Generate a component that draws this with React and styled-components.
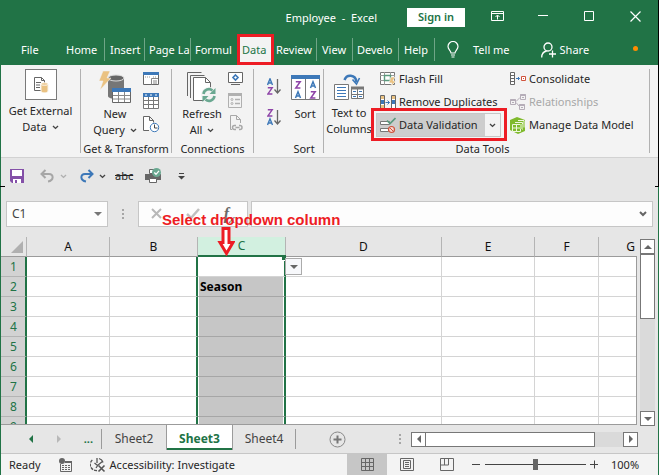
import React from 'react';
import styled, { createGlobalStyle, css } from 'styled-components';

const green = '#217346';
const ink = '#262626';
const red = '#ed1c24';

const Global = createGlobalStyle`
  *, *::before, *::after { box-sizing: border-box; }
  body { margin: 0; background: #e6e6e6; }
  body, button, input { font-family: "Noto Sans", "Open Sans", sans-serif; font-size: 11px; line-height: 16px; color: ${ink}; }
  button { border: 0; padding: 0; background: none; white-space: nowrap; }
  svg { display: block; flex: none; }
`;

const Window = styled.div`
  position: relative;
  display: flex;
  flex-direction: column;
  min-height: 100vh;
  background: #e6e6e6;
  border: solid ${green};
  border-width: 0 1px 1px;
`;
const EdgeMark = styled.i`
  position: absolute;
  background: #000;
  ${p => p.$left
    ? css`left: -1px; top: 186px; width: 5px; height: 1px;`
    : css`right: -1px; top: 0; width: 1px; height: 186px;`}
`;
const EdgeTick = styled.i`
  position: absolute;
  right: -1px;
  top: 186px;
  width: 4px;
  height: 1px;
  background: #000;
`;

/* Title bar */
const TitleBar = styled.header`
  display: flex;
  align-items: center;
  height: 34px;
  padding-right: 17px;
  background: ${green};
  color: #fff;
`;
const DocTitle = styled.h1`
  flex: 1;
  margin: 0;
  padding: 2px 30px 0 0;
  font-size: 11px;
  font-weight: 400;
  text-align: right;
  white-space: pre;
`;
const SignIn = styled.button`
  width: 58px;
  height: 19px;
  margin-right: 26px;
  background: #fff;
  color: ${green};
  font-weight: 600;
  line-height: 18px;
`;
const WinButtons = styled.div`
  display: flex;
  flex: none;
  gap: 34px;
  color: #fff;
`;
const WinButton = styled.button`
  display: grid;
  place-items: center;
  width: 12px;
  height: 16px;
  margin-top: -2px;
  color: inherit;
`;

/* Ribbon tabs */
const TabBar = styled.nav`
  display: flex;
  align-items: center;
  height: 31px;
  background: ${green};
  color: #fff;
`;
const Tab = styled.button`
  flex: none;
  width: ${p => p.$w}px;
  height: 23px;
  padding-left: ${p => p.$pad ?? 5}px;
  color: #fff;
  text-align: left;
  ${p => p.$sep && css`border-right: 1px solid #6fa587;`}
`;
const ActiveTab = styled(Tab)`
  height: 31px;
  border: 3px solid ${red};
  padding-left: 2px;
  background: #f3f3f3;
  color: ${green};
`;
const TabTool = styled.button`
  display: flex;
  align-items: center;
  flex: none;
  gap: ${p => p.$gap}px;
  margin-left: ${p => p.$ml}px;
  color: #fff;
`;
const Dot = styled.i`
  width: 5px;
  height: 5px;
  margin: 0 20px 3px auto;
  border-radius: 50%;
  background: #ff8c00;
`;

/* Ribbon */
const Ribbon = styled.section`
  display: flex;
  height: 93px;
  padding: 4px 8px 0 0;
  background: #f3f3f3;
  border-bottom: 1px solid #d2d2d2;
`;
const Group = styled.div`
  display: flex;
  flex-direction: column;
  flex: ${p => (p.$w ? 'none' : '1')};
  width: ${p => (p.$w ? p.$w + 'px' : 'auto')};
  min-width: 0;
  height: 84px;
  border-right: 1px solid #b1b1b1;
`;
const GroupBody = styled.div`
  display: flex;
  flex: 1;
  min-height: 0;
  padding-left: ${p => p.$pl || 0}px;
`;
const GroupLabel = styled.div`
  height: 16px;
  margin-bottom: -6px;
  padding: 0 ${p => p.$pr || 0}px 0 ${p => p.$pl || 0}px;
  text-align: center;
  white-space: nowrap;
  line-height: 12px;
`;
const BigButton = styled.button`
  display: flex;
  flex-direction: column;
  align-items: center;
  flex: none;
  width: ${p => p.$w}px;
  height: 70px;
`;
const BigIcon = styled.span`
  display: grid;
  place-items: center;
  flex: none;
  height: ${p => p.$h || 37}px;
`;
const BoxedIcon = styled.span`
  display: grid;
  place-items: center;
  width: 32px;
  height: 31px;
  margin-bottom: 3px;
  flex: none;
  border: 1px solid #7a7a7a;
  background: #fff;
`;
const Line = styled.span`
  display: flex;
  align-items: center;
  gap: 5px;
  height: 16px;
`;
const IconColumn = styled.div`
  display: flex;
  flex-direction: column;
  flex: none;
  gap: ${p => p.$gap || 6}px;
  padding-top: ${p => p.$pt || 2}px;
  margin-left: ${p => p.$ml || 0}px;
`;
const ToolList = styled.div`
  display: flex;
  flex-direction: column;
  flex: none;
  width: 130px;
  gap: 7px;
  padding-top: 2px;
`;
const Tool = styled.button`
  display: flex;
  align-items: center;
  gap: 3px;
  height: 16px;
  color: ${p => (p.disabled ? '#a8a8a8' : ink)};
`;
const SplitTool = styled.div`
  position: relative;
  display: flex;
  width: 125px;
  height: 24px;
  margin: -4px 0 0 -4px;
  background: #cdcdcd;
  border: 1px solid #c6c6c6;
  &::after {
    content: '';
    position: absolute;
    inset: -6px -7px -5px -6px;
    border: 3px solid ${red};
    pointer-events: none;
  }
`;
const SplitMain = styled(Tool)`
  flex: 1;
  height: 22px;
  padding-left: 3px;
`;
const SplitArrow = styled.button`
  display: grid;
  place-items: center;
  width: 15px;
  background: #f3f3f3;
`;

/* Quick access */
const QuickBar = styled.div`
  display: flex;
  align-items: center;
  height: 36px;
  padding-left: 8px;
`;
const QuickButton = styled.button`
  display: grid;
  place-items: center;
  width: ${p => p.$w || 16}px;
  height: 20px;
  margin-right: ${p => p.$mr || 0}px;
`;
const Strike = styled.s`
  font-size: 11px;
`;

/* Formula bar */
const FormulaRow = styled.div`
  display: flex;
  height: 43px;
  padding: 7px 5px 10px;
`;
const Field = styled.div`
  display: flex;
  align-items: center;
  flex: ${p => (p.$w ? 'none' : '1')};
  width: ${p => (p.$w ? p.$w + 'px' : 'auto')};
  min-width: 0;
  border: 1px solid #c6c6c6;
  background: #fdfdfd;
  padding: 0 ${p => p.$px || 5}px;
  justify-content: ${p => (p.$spread ? 'space-between' : 'flex-start')};
`;
const TextInput = styled.input`
  flex: 1;
  min-width: 0;
  border: 0;
  padding: 0;
  background: none;
  outline: none;
  font-size: 12px;
  color: #444;
`;
const Grip = styled.span`
  display: grid;
  place-items: center;
  flex: none;
  width: ${p => p.$w}px;
`;
const Fx = styled.button`
  font: italic bold 16px/20px "Liberation Serif", serif;
  color: #6b6b6b;
  sub { font-size: 12px; line-height: 0; }
`;

/* Sheet */
const SheetArea = styled.main`
  display: flex;
  flex: 1;
  min-height: 188px;
`;
const GridClip = styled.div`
  position: relative;
  flex: 1;
  min-width: 0;
  height: 188px;
  overflow: hidden;
  border-bottom: 1px solid #9b9b9b;
  &::after {
    content: '';
    position: absolute;
    right: 0;
    top: 19px;
    bottom: 0;
    width: 1px;
    background: #9b9b9b;
  }
`;
const Table = styled.table`
  width: 662px;
  table-layout: fixed;
  border-collapse: separate;
  border-spacing: 0;
  font-size: 12px;
`;
const Col = styled.col`
  width: ${p => p.$w}px;
`;
const HeadCell = styled.th`
  height: 20px;
  padding: 0;
  font-weight: 400;
  line-height: 18px;
  color: ${p => (p.$on ? green : '#111')};
  background: ${p => (p.$on ? '#d2f0e0' : '#e6e6e6')};
  border-bottom: ${p => (p.$on ? '2px solid ' + green : '1px solid #9b9b9b')};
  border-right: 1px solid #b4b4b4;
`;
const RowHead = styled.th`
  height: 20px;
  padding: 0 0 0 1px;
  font-weight: 400;
  line-height: 17px;
  color: ${green};
  background: #d2d2d2;
  border-right: 2px solid ${green};
  border-bottom: 1px solid #b4b4b4;
`;
const Cell = styled.td`
  height: 20px;
  padding: 0;
  background: #fff;
  border-right: 1px solid #d4d4d4;
  border-bottom: 1px solid #d4d4d4;
  ${p => p.$beforeSel && css`border-right: 2px solid ${green};`}
  ${p => p.$sel && css`
    padding-left: 2px;
    border-right: 2px solid ${green};
    border-bottom-color: ${p.$active ? '#d4d4d4' : '#a6a6a6'};
    background: ${p.$active ? '#fff' : '#c6c6c6'};
    box-shadow: inset 1px 0 #fff, inset -1px 0 #fff;
    color: #000;
    font-weight: 700;
    line-height: 18px;
  `}
`;
const CellMenu = styled.button`
  position: absolute;
  left: 284px;
  top: 21px;
  display: grid;
  place-items: center;
  width: 17px;
  height: 17px;
  border: 1px solid #ababab;
  background: #f7f8fb;
`;
const Handle = styled.i`
  position: absolute;
  left: 281px;
  top: 18px;
  width: 4px;
  height: 6px;
  background: ${green};
  border-bottom: 1px solid #fff;
`;
const Note = styled.p`
  position: absolute;
  left: 161px;
  top: 211px;
  margin: 0;
  color: ${red};
  font: bold 15px/18px "Liberation Sans", sans-serif;
  white-space: nowrap;
`;
const NoteArrow = styled.svg`
  position: absolute;
  left: 216px;
  top: 227px;
`;

/* Scroll bars */
const VBar = styled.div`
  display: flex;
  flex-direction: column;
  flex: none;
  width: 15px;
  margin: 2px 3px 0 3px;
  height: 187px;
  background: #dadada;
`;
const HBar = styled.div`
  display: flex;
  flex: 1;
  height: 15px;
  min-width: 0;
  background: #dadada;
`;
const ScrollButton = styled.button`
  display: grid;
  place-items: center;
  flex: none;
  width: 15px;
  height: 15px;
  border: 1px solid #777;
  background: #fff;
`;
const VThumb = styled.div`
  height: 66px;
  margin: -1px 0 auto;
  border: 1px solid #777;
  border-top-width: 2px;
  background: #fff;
`;
const HThumb = styled.div`
  width: 75%;
  margin: 0 auto 0 -1px;
  border: 1px solid #777;
  background: #fff;
`;

/* Sheet tabs */
const SheetBar = styled.div`
  display: flex;
  align-items: center;
  height: 27px;
  padding: 0 20px 1px 0;
`;
const SheetNav = styled.div`
  display: flex;
  align-items: center;
  justify-content: space-between;
  flex: none;
  width: 101px;
  height: 20px;
  padding: 0 8px 0 26px;
  border-right: 1px solid #9b9b9b;
  color: ${green};
  font-weight: 700;
`;
const SheetTab = styled.button`
  flex: none;
  width: ${p => p.$w}px;
  height: 20px;
  font-size: 12px;
  line-height: 18px;
  color: #444;
  ${p => p.$end && css`border-right: 1px solid #9b9b9b;`}
  ${p => p.$on && css`
    position: relative;
    align-self: flex-start;
    height: 25px;
    margin-top: -1px;
    padding-top: 3px;
    color: ${green};
    font-weight: 700;
    background: #fff;
    border: solid #9b9b9b;
    border-width: 0 1px;
    box-shadow: inset 0 -2px ${green};
  `}
`;
const AddSheet = styled.button`
  margin: 0 43px 0 33px;
`;

/* Status bar */
const StatusBar = styled.footer`
  display: flex;
  align-items: center;
  height: 22px;
  padding: 0 19px 0 8px;
  background: #f3f3f3;
  border-top: 1px solid #c6c6c6;
  white-space: nowrap;
`;
const StatusButton = styled.button`
  display: flex;
  align-items: center;
  gap: 4px;
  margin-left: ${p => p.$ml || 0}px;
`;
const ViewButton = styled.button`
  display: grid;
  place-items: center;
  flex: none;
  width: 40px;
  height: 21px;
  background: ${p => (p.$on ? '#c6c6c6' : 'transparent')};
`;
const Views = styled.div`
  display: flex;
  margin-left: auto;
  margin-right: 5px;
`;
const Zoom = styled.input`
  appearance: none;
  width: 101px;
  height: 12px;
  margin: 0 4px;
  background: linear-gradient(#444, #444) center / 100% 1px no-repeat;
  &::-webkit-slider-thumb {
    appearance: none;
    width: 5px;
    height: 11px;
    background: #666;
  }
`;
const ZoomValue = styled.output`
  width: 28px;
  margin-left: 12px;
`;

const Chevron = ({ c = '#444' }) => (
  <svg width="7" height="5" viewBox="0 0 7 5" fill="none" stroke={c} strokeWidth="1.4"><path d="M1 1l2.5 2.4L6 1" /></svg>
);
const Tri = ({ dir = 'down', c = '#666', s = 8 }) => {
  const d = { down: 'M0 2h8l-4 4z', up: 'M0 6h8l-4-4z', left: 'M6 0v8l-4-4z', right: 'M2 0v8l4-4z' }[dir];
  return <svg width={s} height={s} viewBox="0 0 8 8"><path d={d} fill={c} /></svg>;
};
const Dots = () => (
  <svg width="3" height="12" fill="#a6a6a6"><path d="M0 1h2v2H0zM0 5h2v2H0zM0 9h2v2H0z" /></svg>
);
const Plus = ({ minus }) => (
  <svg width="9" height="9" stroke="#444" fill="none"><path d={minus ? 'M0 4.5h8' : 'M0 4.5h8M4.5 .5v8'} /></svg>
);

const ExternalIcon = () => (
  <svg width="16" height="16" viewBox="0 0 16 16" fill="none">
    <path d="M1.5.5h7l3 3v10h-10z" fill="#fff" stroke="#666" /><path d="M8.5.5v3h3M3 5.5h5M3 8h4M3 10.5h4" stroke="#666" />
    <path d="M8 7v7c0 2.4 7 2.4 7 0V7z" fill="#eac282" stroke="#f8f2e7" /><ellipse cx="11.5" cy="7" rx="3.5" ry="1.5" fill="#efd0a0" stroke="#fff" strokeWidth=".6" />
  </svg>
);
const QueryIcon = () => (
  <svg width="33" height="33" viewBox="0 0 33 33">
    <path d="M9 7v18c0 4 16 4 16 0V7z" fill="#767676" /><ellipse cx="17" cy="7" rx="8" ry="3" fill="#666" stroke="#ddd" />
    <path d="M4 0h7L8 7h4L1 19l3-9H0z" fill="#eac282" stroke="#f3f3f3" strokeWidth=".5" />
    <path d="M13.500 17.500h18v14h-18z" fill="#fff" stroke="#666" /><path d="M13 17h19v4H13z" fill="#3d78b8" />
    <path d="M14 24.500h17M14 28h17M19.500 21v10M25.500 21v10" stroke="#888" />
  </svg>
);
const PanelIcon = () => (
  <svg width="16" height="16" fill="none" stroke="#666"><path d="M.5 1.500h15v12H.5z" fill="#fff" /><path d="M0 1h16v3H0z" fill="#3d78b8" stroke="none" /><path d="M8.500 13.500V7.500H15M10 10h4M10 12h4" stroke="#888" /><path d="M2 6h5M10 6h4" stroke="#999" strokeDasharray="1 1" /></svg>
);
const TableIcon = () => (
  <svg width="16" height="17" fill="none" stroke="#777"><path d="M.5 1.500h15v14H.5z" fill="#fff" /><path d="M0 0h16v4H0z" fill="#3d78b8" stroke="none" /><path d="M0 7.500h16M0 11.500h16M5.500 4v12M10.500 4v12" /><path d="M2 2h2M7 2h2M12 2h2" stroke="#fff" /></svg>
);
const RecentIcon = () => (
  <svg width="17" height="17" fill="none" stroke="#666"><path d="M6 14.500H.5v-14h6l4 4v2M6.500.5v4h4" fill="#fff" /><circle cx="11.500" cy="11.500" r="4.200" fill="#fff" stroke="#3d78b8" /><path d="M11.500 8.500v3.500h3" stroke="#444" /></svg>
);
const RefreshIcon = () => (
  <svg width="31" height="31" viewBox="0 0 31 31" fill="none" stroke="#666">
    <path d="M.5 24V.5h14M3.500 26V3.500h14" /><path d="M6.500 28.500v-23h12l5 5v18z" fill="#fff" /><path d="M18.500 5.500v5h5" />
    <circle cx="22" cy="23" r="8" fill="#f3f3f3" stroke="none" />
    <path d="M16.500 22a5.500 5.500 0 0 1 9-3.500M27.500 24a5.500 5.500 0 0 1-9 3.500" stroke="#6aa891" strokeWidth="2.600" />
    <path d="M28.500 16v6h-6zM15.500 30v-6h6z" fill="#6aa891" stroke="none" />
  </svg>
);
const ConnIcon = () => (
  <svg width="15" height="15" fill="none" stroke="#666"><path d="M.5 1.500h14v10H.5zM3 13.500h9" fill="#fff" /><path d="M7.500 4l2.500 2.500L7.500 9 5 6.500z" stroke="#3d78b8" strokeWidth="1.600" /></svg>
);
const PropsIcon = () => (
  <svg width="14" height="17" fill="none" stroke="#b0b0b0"><path d="M.5 1.500h13v14H.5z" /><path d="M0 2.500h14" strokeWidth="3" /><path d="M7 7.500h5M7 11.500h5" strokeWidth="1.400" /><circle cx="4" cy="7.500" r="1" /><circle cx="4" cy="11.500" r="1" /></svg>
);
const LinkIcon = () => (
  <svg width="15" height="17" fill="none" stroke="#a8a8a8"><path d="M4 14.500H2.500V.5h6l4 4V8M8.500.5v4h4" /><path d="M8 14.500H6.500a2 2 0 0 1 0-4H8M11 10.500h1a2 2 0 0 1 0 4h-1M7.500 12.500h4" strokeWidth="1.500" /></svg>
);
const SORT_A = 'M.5 7L3 .8 5.500 7M1.400 5h3.200';
const SORT_Z = 'M.8.8h4.400L.8 7h4.600';
const OrderIcon = ({ desc }) => (
  <svg width="15" height="18" fill="none" strokeWidth="1.400">
    <path d={desc ? SORT_Z : SORT_A} stroke={desc ? '#8e44a8' : '#3d78b8'} />
    <g transform="translate(0 9)"><path d={desc ? SORT_A : SORT_Z} stroke={desc ? '#3d78b8' : '#8e44a8'} /></g>
    <path d="M10.500 1v13.500M7.500 11.500l3 3.500 3-3.500" stroke="#666" strokeWidth="1.300" />
  </svg>
);
const SortIcon = () => (
  <svg width="29" height="26" fill="none" strokeWidth="1.500">
    <path d="M.5.5h28v24H.5zM14.500 4v21" fill="#fff" stroke="#777" strokeWidth="1" /><path d="M0 0h29v4H0z" fill="#3d78b8" />
    <g transform="translate(4 6)"><path d={SORT_Z} stroke="#8e44a8" /></g><g transform="translate(4 16)"><path d={SORT_A} stroke="#3d78b8" /></g>
    <g transform="translate(19 6)"><path d={SORT_A} stroke="#3d78b8" /></g><g transform="translate(19 16)"><path d={SORT_Z} stroke="#8e44a8" /></g>
  </svg>
);
const ColumnsIcon = () => (
  <svg width="31" height="27" fill="none" stroke="#777">
    <path d="M.5 10.500h14v15H.5z" fill="#fff" /><path d="M3 13.500h9M3 16.500h9M3 19.500h9M3 22.500h9" stroke="#3d78b8" />
    <path d="M17.500 13.500h12v11h-12z" fill="#fff" /><path d="M17 14h13" strokeWidth="3" /><path d="M23.500 15v10M18 20.500h12" /><path d="M19 17.500h3M25 17.500h3M19 22.500h3M25 22.500h3" stroke="#3d78b8" />
    <path d="M10.500 6c2-6 11-6 12 2" stroke="#3d78b8" strokeWidth="2.500" /><path d="M18.500 5.500l4 4.500 3-6" stroke="#3d78b8" strokeWidth="1.600" />
  </svg>
);
const FlashIcon = () => (
  <svg width="16" height="15" fill="none" stroke="#777"><path d="M.5.5h14v12H.5z" fill="#fff" /><path d="M0 3.500h15M0 8.500h10M4.500 0v13M10.500 0v6" stroke="#999" /><path d="M4.500 3.500h6v5h-6z" stroke="#5b9a7e" strokeWidth="1.400" /><path d="M11 5h4l-2 4h3l-6 6 2-4H9z" fill="#eac282" stroke="#f3f3f3" strokeWidth=".6" /></svg>
);
const DupIcon = () => (
  <svg width="16" height="15" fill="none" stroke="#666"><path d="M.5.5h4v14h-4zM11.500.5h4v14h-4z" fill="#fff" /><path d="M1 1h3v3H1zM1 10h3v4H1zM12 1h3v3h-3z" fill="#eac282" stroke="none" /><path d="M1 5h3v4H1zM12 5h3v4h-3z" fill="#3d78b8" stroke="none" /><path d="M5.500 7.500H9.500M7.500 5.500l2 2-2 2" stroke="#3d78b8" /></svg>
);
const ValidIcon = () => (
  <svg width="16" height="17" fill="none" stroke="#777"><path d="M.5 4.500h9v3h-9zM.5 11.500h8v3h-8z" fill="#fff" /><path d="M7 3.500l3 3L15.500 1" stroke="#5b9a7e" strokeWidth="1.700" /><circle cx="11.500" cy="12.500" r="3" fill="#f7d8d2" stroke="#d0533c" strokeWidth="1.200" /><path d="M9.500 10.500l4 4" stroke="#d0533c" /></svg>
);
const ConsolidateIcon = () => (
  <svg width="16" height="14" fill="none" stroke="#666"><path d="M.5.5h4v12h-4zM.5 3.500h4M.5 6.500h4M.5 9.500h4" fill="#fff" /><path d="M6 6.500h3.500M8 5l1.500 1.500L8 8" stroke="#3d78b8" /><path d="M11.500 4.500h4v4h-4z" stroke="#d0533c" fill="#fff" /><path d="M13 6.500h1" stroke="#d0533c" /></svg>
);
const RelIcon = () => (
  <svg width="16" height="16" fill="none" stroke="#b5adb8"><path d="M.5 5.500h5v5h-5zM10.500.5h5v5h-5zM9.500 10.500h5v5h-5zM6 7.500l4-4M6 8.500l3.500 4" /><path d="M.5 6h5M10.500 1h5M9.500 11h5" strokeWidth="2" /><path d="M2 8.500h2M12 3.500h2M11 13.500h2" /></svg>
);
const ModelIcon = () => (
  <svg width="16" height="17" fill="none"><path d="M0 3l7-3 8 3v11l-7 3-8-4z" fill="#7fba2c" /><path d="M2.500 7.500h8v7h-8zM2.500 11h8M6.500 7.500v7M5 5.500h7.500v7M8 3.500h6v7" stroke="#eef6df" /><path d="M10 7h3v5h-3z" fill="#b9dc86" /></svg>
);
const SaveIcon = () => (
  <svg width="14" height="14"><path d="M0 0h14v14H2l-2-2z" fill="#8450a8" /><path d="M2 1h10v6H2z" fill="#fff" /><path d="M3 10h8v4H3z" fill="#fff" /><path d="M5 11h2v3H5z" fill="#8450a8" /></svg>
);
const UndoIcon = ({ flip, c }) => (
  <svg width="15" height="14" fill="none" stroke={c} strokeWidth="2"><g transform={flip ? 'translate(15 0) scale(-1 1)' : undefined}><path d="M2 5h7c5 0 5 6.500-1 7.500" /><path d="M5.500 1L1.500 5l4 4" /></g></svg>
);
const PrintIcon = () => (
  <svg width="17" height="16"><path d="M4.500 1.500h8v4h-8z" fill="#fff" stroke="#666" /><path d="M0 6h16v6H0z" fill="#666" /><path d="M4.500 10.500h7v4h-7z" fill="#fff" stroke="#666" /><circle cx="11.500" cy="4.500" r="4.500" fill="#6aa891" /><path d="M9.300 4.500l1.700 1.800 3-3.500" fill="none" stroke="#fff" strokeWidth="1.300" /></svg>
);

const COLUMNS = ['A', 'B', 'C', 'D', 'E', 'F', 'G'];
const WIDTHS = [26, 83, 88, 88, 156, 93, 64, 64];
const ROWS = [1, 2, 3, 4, 5, 6, 7, 8, 9];

export default function App() {
  return (
    <Window>
      <Global />
      <TitleBar>
        <DocTitle>Employee  -  Excel</DocTitle>
        <SignIn>Sign in</SignIn>
        <WinButtons>
          <WinButton aria-label="Ribbon display options"><svg width="13" height="10" fill="none" stroke="#fff"><path d="M.5.5h12v9H.5zM.5 2.500h12M6.500 8.500v-4M4.500 6l2-2 2 2" /></svg></WinButton>
          <WinButton aria-label="Minimize"><svg width="10" height="10" stroke="#fff"><path d="M0 4.500h10" /></svg></WinButton>
          <WinButton aria-label="Maximize"><svg width="10" height="10" fill="none" stroke="#fff"><path d="M.5.5h9v9h-9z" /></svg></WinButton>
          <WinButton aria-label="Close"><svg width="11" height="11" stroke="#fff" strokeWidth="1.200"><path d="M.5.500l10 10M10.500.5l-10 10" /></svg></WinButton>
        </WinButtons>
      </TitleBar>

      <TabBar>
        <Tab $w={60} $pad={20}>File</Tab>
        <Tab $w={44} $sep>Home</Tab>
        <Tab $w={40} $sep>Insert</Tab>
        <Tab $w={46} $sep $pad={4} aria-label="Page Layout">Page La</Tab>
        <Tab $w={46} $pad={4} aria-label="Formulas">Formul</Tab>
        <ActiveTab $w={37} aria-current="page">Data</ActiveTab>
        <Tab $w={43} $sep $pad={2}>Review</Tab>
        <Tab $w={36} $sep>View</Tab>
        <Tab $w={46} $sep $pad={4} aria-label="Developer">Develo</Tab>
        <Tab $w={36} $sep>Help</Tab>
        <TabTool $ml={12} $gap={14}>
          <svg width="12" height="17" fill="none" stroke="#fff" strokeWidth="1.200"><path d="M4 12c0-2-3-3.500-3-6.500a5 5 0 0 1 10 0C11 8.500 8 10 8 12zM4 14h4M4.500 16h3" /></svg>
          Tell me
        </TabTool>
        <TabTool $ml={31} $gap={4}>
          <svg width="15" height="16" fill="none" stroke="#fff" strokeWidth="1.300"><circle cx="7" cy="5" r="4" /><path d="M.7 15.500c0-4 2.300-6 5-6.500M11.500 8.500v7M8 12h7" /></svg>
          Share
        </TabTool>
        <Dot />
      </TabBar>

      <Ribbon>
        <Group $w={80}>
          <BigButton $w={79}>
            <BoxedIcon><ExternalIcon /></BoxedIcon>
            <Line>Get External</Line>
            <Line>Data <Chevron /></Line>
          </BigButton>
        </Group>
        <Group $w={91}>
          <GroupBody $pl={6}>
            <BigButton $w={56}>
              <BigIcon><QueryIcon /></BigIcon>
              <Line>New</Line>
              <Line>Query <Chevron /></Line>
            </BigButton>
            <IconColumn>
              <PanelIcon /><TableIcon /><RecentIcon />
            </IconColumn>
          </GroupBody>
          <GroupLabel>Get &amp; Transform</GroupLabel>
        </Group>
        <Group $w={82}>
          <GroupBody $pl={6}>
            <BigButton $w={48}>
              <BigIcon><RefreshIcon /></BigIcon>
              <Line>Refresh</Line>
              <Line>All <Chevron /></Line>
            </BigButton>
            <IconColumn $ml={2}>
              <ConnIcon /><PropsIcon /><LinkIcon />
            </IconColumn>
          </GroupBody>
          <GroupLabel>Connections</GroupLabel>
        </Group>
        <Group $w={70}>
          <GroupBody $pl={13}>
            <IconColumn $pt={9} $gap={13}><OrderIcon /><OrderIcon desc /></IconColumn>
            <BigButton $w={46}>
              <BigIcon><SortIcon /></BigIcon>
              <Line>Sort</Line>
            </BigButton>
          </GroupBody>
          <GroupLabel $pl={31}>Sort</GroupLabel>
        </Group>
        <Group>
          <GroupBody>
            <BigButton $w={50}>
              <BigIcon $h={36}><ColumnsIcon /></BigIcon>
              <Line>Text to</Line>
              <Line>Columns</Line>
            </BigButton>
            <IconColumn $ml={6} />
            <ToolList>
              <Tool><FlashIcon />Flash Fill</Tool>
              <Tool><DupIcon />Remove Duplicates</Tool>
              <SplitTool>
                <SplitMain><ValidIcon />Data Validation</SplitMain>
                <SplitArrow aria-label="Data Validation options"><Chevron /></SplitArrow>
              </SplitTool>
            </ToolList>
            <ToolList>
              <Tool><ConsolidateIcon />Consolidate</Tool>
              <Tool disabled><RelIcon />Relationships</Tool>
              <Tool><ModelIcon />Manage Data Model</Tool>
            </ToolList>
          </GroupBody>
          <GroupLabel $pr={8}>Data Tools</GroupLabel>
        </Group>
      </Ribbon>

      <QuickBar>
        <QuickButton $mr={14} aria-label="Save"><SaveIcon /></QuickButton>
        <QuickButton $mr={4} aria-label="Undo"><UndoIcon c="#a6a6a6" /></QuickButton>
        <QuickButton $w={9} $mr={10} aria-label="Undo history"><Chevron c="#b0b0b0" /></QuickButton>
        <QuickButton $mr={4} aria-label="Redo"><UndoIcon flip c="#3d78b8" /></QuickButton>
        <QuickButton $w={9} $mr={8} aria-label="Redo history"><Chevron /></QuickButton>
        <QuickButton $w={18} $mr={11}><Strike>abc</Strike></QuickButton>
        <QuickButton $w={18} $mr={11} aria-label="Print preview"><PrintIcon /></QuickButton>
        <QuickButton aria-label="Customize toolbar"><svg width="7" height="7" fill="#444"><path d="M1 0h5v1H1zM0 3h7L3.500 6.500z" /></svg></QuickButton>
      </QuickBar>

      <FormulaRow>
        <Field $w={102}>
          <TextInput aria-label="Name box" defaultValue="C1" />
          <button aria-label="Choose name"><Tri c="#777" /></button>
        </Field>
        <Grip $w={30}><Dots /></Grip>
        <Field $w={110} $px={12} $spread>
          <button aria-label="Cancel"><svg width="12" height="12" stroke="#b8b8b8" strokeWidth="2"><path d="M1 1l9 9M10 1l-9 9" /></svg></button>
          <button aria-label="Enter"><svg width="14" height="12" fill="none" stroke="#c0c0c0" strokeWidth="2.500"><path d="M1 6l4 4 8-9" /></svg></button>
          <Fx aria-label="Insert function">f<sub>x</sub></Fx>
        </Field>
        <Grip $w={3} />
        <Field>
          <TextInput aria-label="Formula" />
          <button aria-label="Expand formula bar"><svg width="8" height="6" fill="none" stroke="#666" strokeWidth="2"><path d="M1 1l3 3 3-3" /></svg></button>
        </Field>
      </FormulaRow>

      <SheetArea>
        <GridClip>
          <Table>
            <colgroup>{WIDTHS.map((w, i) => <Col key={i} $w={w} />)}</colgroup>
            <thead>
              <tr>
                <HeadCell aria-label="Select all"><svg width="24" height="17"><path d="M10 15h12V3z" fill="#b0b0b0" /></svg></HeadCell>
                {COLUMNS.map(c => <HeadCell key={c} $on={c === 'C'}>{c}</HeadCell>)}
              </tr>
            </thead>
            <tbody>
              {ROWS.map(r => (
                <tr key={r}>
                  <RowHead>{r}</RowHead>
                  {COLUMNS.map(c => (
                    <Cell key={c} $sel={c === 'C'} $active={r === 1} $beforeSel={c === 'B'}>
                      {c === 'C' && r === 2 ? 'Season' : null}
                    </Cell>
                  ))}
                </tr>
              ))}
            </tbody>
          </Table>
          <Handle />
          <CellMenu aria-label="Cell drop-down"><Tri /></CellMenu>
        </GridClip>
        <VBar>
          <ScrollButton aria-label="Scroll up"><Tri dir="up" /></ScrollButton>
          <VThumb />
          <ScrollButton aria-label="Scroll down"><Tri /></ScrollButton>
        </VBar>
      </SheetArea>

      <SheetBar>
        <SheetNav>
          <Tri dir="left" c={green} /><Tri dir="right" c="#b8b8b8" /><span>...</span>
        </SheetNav>
        <SheetTab $w={64}>Sheet2</SheetTab>
        <SheetTab $w={67} $on>Sheet3</SheetTab>
        <SheetTab $w={63} $end>Sheet4</SheetTab>
        <AddSheet aria-label="New sheet"><svg width="17" height="17" fill="none" stroke="#888"><circle cx="8.500" cy="8.500" r="7.500" /><path d="M8.500 4.500v8M4.500 8.500h8" stroke="#777" strokeWidth="2" /></svg></AddSheet>
        <Grip $w={22}><Dots /></Grip>
        <HBar>
          <ScrollButton aria-label="Scroll left"><Tri dir="left" /></ScrollButton>
          <HThumb />
          <ScrollButton aria-label="Scroll right"><Tri dir="right" /></ScrollButton>
        </HBar>
      </SheetBar>

      <StatusBar>
        Ready
        <StatusButton $ml={18} aria-label="Macro recording">
          <svg width="14" height="14" fill="none" stroke="#666"><path d="M1.500 6v7.500h11V3.500H6" /><path d="M6 3h7v2H6z" fill="#666" stroke="none" /><path d="M3 7.500h8M3 9.500h8M3 11.500h8" strokeDasharray="2 1" /><circle cx="3" cy="3" r="3" fill="#666" stroke="none" /></svg>
        </StatusButton>
        <StatusButton $ml={17}>
          <svg width="16" height="16" fill="none" stroke="#555" strokeWidth="1.300"><path d="M7 13.500A6 6 0 0 1 3 2.500" strokeDasharray="3 1" /><path d="M7 1v5M4.500 6l3 2.500L13 4M9 1.500a6 6 0 0 1 4 4M8 8l-2 3" /><path d="M8.500 8.500l6 6M14.500 8.500l-6 6" strokeWidth="1.600" /></svg>
          Accessibility: Investigate
        </StatusButton>
        <Views>
          <ViewButton $on aria-label="Normal view"><svg width="13" height="13" fill="none" stroke="#666"><path d="M.5.5h12v12H.5zM4.500 0v13M8.500 0v13M0 4.500h13M0 8.500h13" /></svg></ViewButton>
          <ViewButton aria-label="Page layout"><svg width="14" height="13" fill="none" stroke="#666"><path d="M.5.5h13v12H.5zM3.500 2.500h7v8h-7zM5 4.500h4M5 6.500h4M5 8.500h4" /></svg></ViewButton>
          <ViewButton aria-label="Page break preview"><svg width="14" height="13" fill="none" stroke="#666"><path d="M.5.5h13v12H.5zM4.500 1v6M8.500 1v6H1" /></svg></ViewButton>
        </Views>
        <button aria-label="Zoom out"><Plus minus /></button>
        <Zoom type="range" min="0" max="200" defaultValue="100" aria-label="Zoom" />
        <button aria-label="Zoom in"><Plus /></button>
        <ZoomValue>100%</ZoomValue>
      </StatusBar>

      <Note>Select dropdown column</Note>
      <NoteArrow width="18" height="29" fill="#fff" stroke={red} strokeWidth="3"><path d="M6 1.500h6v14h4l-6.500 11L3 15.500h3z" /></NoteArrow>
      <EdgeMark />
      <EdgeMark $left />
      <EdgeTick />
    </Window>
  );
}
